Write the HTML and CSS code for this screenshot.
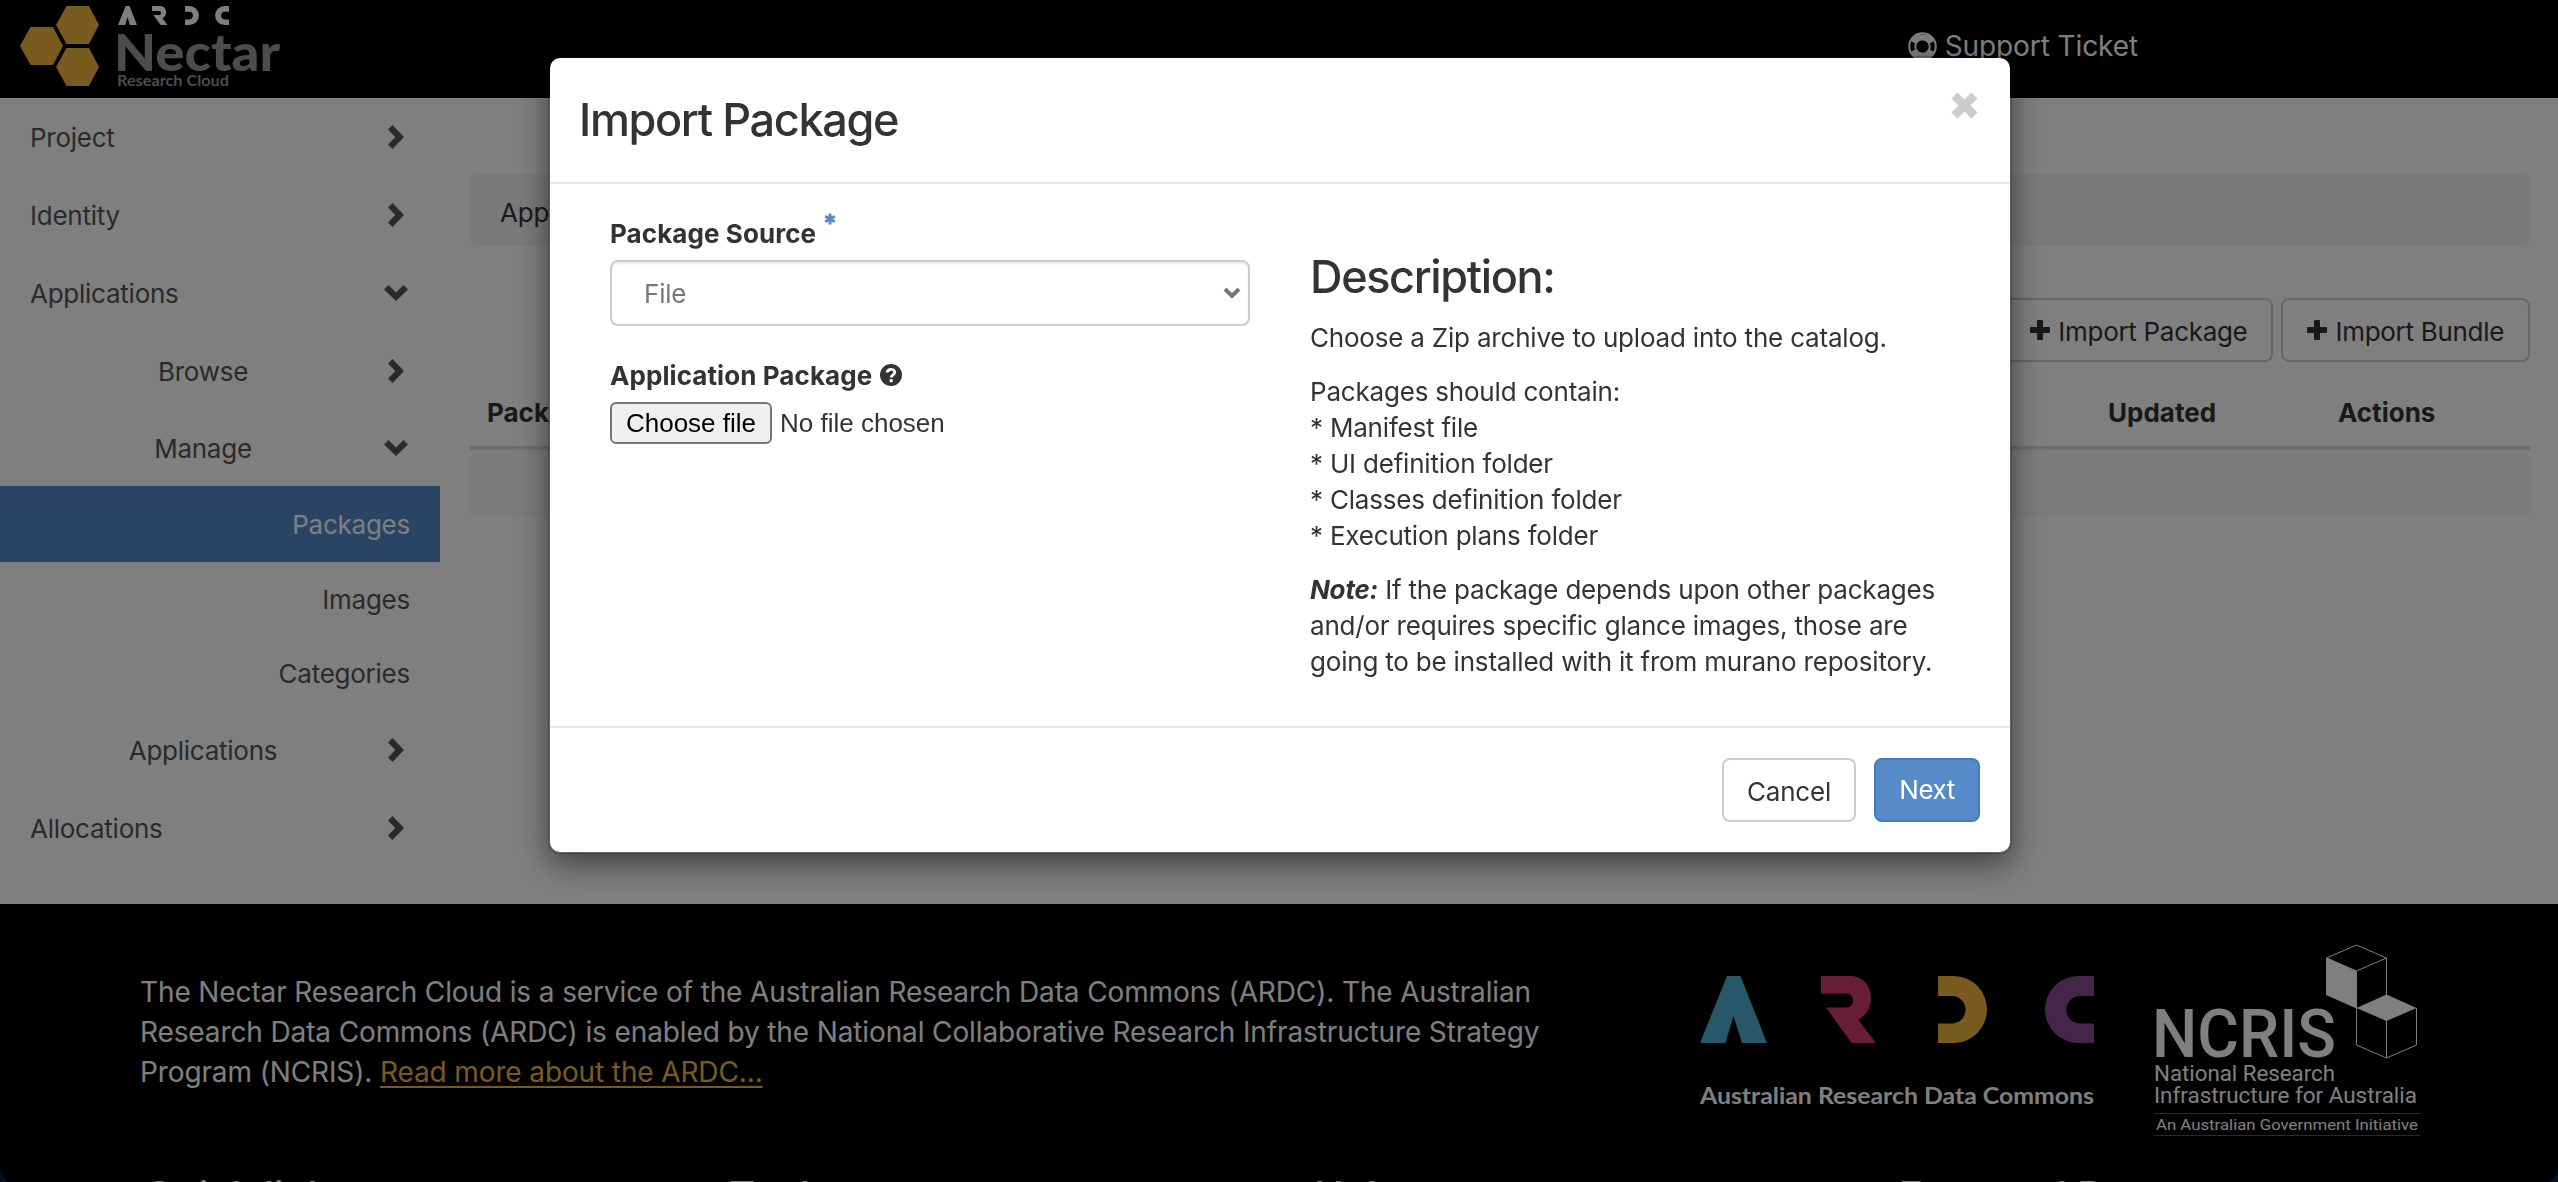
FILE: index.html
```html
<!DOCTYPE html>
<html lang="en">
<head>
<meta charset="utf-8">
<title>Packages - Nectar Research Cloud</title>
<link rel="stylesheet" href="styles.css">
</head>
<body>
<svg class="defs" width="0" height="0" aria-hidden="true">
  <symbol id="chev-right" viewBox="0 0 16 24"><path d="M4.500 0 16 12 4.500 24 0 19.500 7.300 12 0 4.500Z"/></symbol>
  <symbol id="chev-down" viewBox="0 0 24 16"><path d="M0 4.500 4.500 0 12 7.500 19.500 0 24 4.500 12 16Z"/></symbol>
  <symbol id="plus" viewBox="0 0 20 20"><path d="M8 0h4a1 1 0 0 1 1 1v6h6a1 1 0 0 1 1 1v4a1 1 0 0 1-1 1h-6v6a1 1 0 0 1-1 1H8a1 1 0 0 1-1-1v-6H1a1 1 0 0 1-1-1V8a1 1 0 0 1 1-1h6V1a1 1 0 0 1 1-1Z"/></symbol>
  <symbol id="ardc-a" viewBox="0 0 67 67"><path d="M27 0H40.500L67 67H42L33.500 40 25.500 67H0Z"/></symbol>
  <symbol id="ardc-r" viewBox="0 0 55 67"><path d="M0 0H30C42 0 50 10 50 22C50 32 45 40 37 43.500L55 67H30.500L5 31.500H25C30 31.500 32 28 32 24.500C32 21 30 17.500 25 17.500H0Z"/></symbol>
  <symbol id="ardc-d" viewBox="0 0 49 67"><path d="M0 0H15.500A33.500 33.500 0 0 1 15.500 67H0V47.500H15A13.800 13.800 0 0 0 15 20H0Z"/></symbol>
  <symbol id="ardc-c" viewBox="0 0 49 67"><path d="M49 0H33.500A33.500 33.500 0 0 0 33.500 67H49V47.500H34A13.800 13.800 0 0 1 34 20H49Z"/></symbol>
</svg>

<div class="page">
  <header class="topbar">
    <svg class="brand" viewBox="0 0 290 98" width="290" height="98" role="img" aria-label="ARDC Nectar Research Cloud">
      <g class="hex">
        <path d="M20 46 30.500 27H53L63 46 53 65H30.500Z"/>
        <path d="M56 25 66.500 6H89L99 25 89 44H66.500Z"/>
        <path d="M56 67 66.500 48H89L99 67 89 86H66.500Z"/>
      </g>
      <g class="brand-ardc">
        <use href="#ardc-a" x="118" y="6" width="19" height="19"/>
        <use href="#ardc-r" x="152" y="6" width="15.500" height="19"/>
        <use href="#ardc-d" x="185" y="6" width="14" height="19"/>
        <use href="#ardc-c" x="215" y="6" width="14" height="19"/>
      </g>
      <text class="brand-name" x="114" y="71" textLength="166" lengthAdjust="spacingAndGlyphs">Nectar</text>
      <text class="brand-sub" x="117" y="85.500" textLength="112" lengthAdjust="spacingAndGlyphs">Research Cloud</text>
    </svg>
    <a class="support">
      <svg viewBox="0 0 28 28" width="29" height="29"><circle cx="14" cy="14" r="12.800" fill="none" stroke="currentColor" stroke-width="2"/><circle cx="14" cy="14" r="7" fill="none" stroke="currentColor" stroke-width="2"/><path fill="currentColor" d="M9 2.500H19L16.500 8H11.500ZM9 25.500H19L16.500 20H11.500ZM5 5 9 3 11.500 8 8 11.500 3 9ZM23 5 19 3 16.500 8 20 11.500 25 9ZM5 23 9 25 11.500 20 8 16.500 3 19ZM23 23 19 25 16.500 20 20 16.500 25 19Z"/></svg>
      <span>Support Ticket</span>
    </a>
  </header>

  <div class="content">
    <nav class="sidebar">
      <a class="nav-row"><span>Project</span><svg class="cr"><use href="#chev-right"/></svg></a>
      <a class="nav-row"><span>Identity</span><svg class="cr"><use href="#chev-right"/></svg></a>
      <a class="nav-row"><span>Applications</span><svg class="cd"><use href="#chev-down"/></svg></a>
      <a class="nav-row sub"><span>Browse</span><svg class="cr"><use href="#chev-right"/></svg></a>
      <a class="nav-row sub last"><span>Manage</span><svg class="cd"><use href="#chev-down"/></svg></a>
      <a class="nav-leaf active">Packages</a>
      <a class="nav-leaf">Images</a>
      <a class="nav-leaf">Categories</a>
      <a class="nav-row sub"><span>Applications</span><svg class="cr"><use href="#chev-right"/></svg></a>
      <a class="nav-row"><span>Allocations</span><svg class="cr"><use href="#chev-right"/></svg></a>
    </nav>
    <main class="main">
      <div class="breadcrumb">Applications</div>
      <div class="table-actions">
        <a class="btn"><svg class="plus"><use href="#plus"/></svg>Import Package</a>
        <a class="btn"><svg class="plus"><use href="#plus"/></svg>Import Bundle</a>
      </div>
      <div class="table-head"><span>Package Name</span><span>Updated</span><span>Actions</span></div>
      <div class="table-row"></div>
    </main>
  </div>

  <footer class="footer">
    <div class="footer-top">
      <p class="footer-text">The Nectar Research Cloud is a service of the Australian Research Data Commons (ARDC). The Australian<br>Research Data Commons (ARDC) is enabled by the National Collaborative Research Infrastructure Strategy<br>Program (NCRIS). <a class="more">Read more about the ARDC...</a></p>
      <svg class="ardc" viewBox="0 0 394 140" width="394" height="140" role="img" aria-label="Australian Research Data Commons">
        <use class="teal" href="#ardc-a" x="0" y="0" width="67" height="67"/>
        <use class="rose" href="#ardc-r" x="121" y="0" width="55" height="67"/>
        <use class="gold" href="#ardc-d" x="238" y="0" width="49" height="67"/>
        <use class="plum" href="#ardc-c" x="345" y="0" width="49" height="67"/>
        <text class="ardc-name" x="0" y="128" textLength="394" lengthAdjust="spacingAndGlyphs">Australian Research Data Commons</text>
      </svg>
      <svg class="ncris" viewBox="0 0 268 196" width="268" height="196" role="img" aria-label="NCRIS">
        <g class="cube-lines">
          <path d="M172.500 14 202.500 1 232.500 14V51M172.500 14 202.500 27 232.500 14M202.500 27V64"/>
          <path d="M202.500 64V101L232.500 114 262.500 101V64M232.500 77V114"/>
        </g>
        <path class="cube-face" d="M172 13.500 202.500 27V64.500L172 51ZM202.500 64 232.500 50.500 262.500 64 232.500 77Z"/>
        <text class="ncris-name" x="-2" y="112.500" textLength="184" lengthAdjust="spacingAndGlyphs">NCRIS</text>
        <text class="ncris-line" x="0" y="137" textLength="181" lengthAdjust="spacingAndGlyphs">National Research</text>
        <text class="ncris-line" x="0" y="159" textLength="263" lengthAdjust="spacingAndGlyphs">Infrastructure for Australia</text>
        <path class="rule" d="M0 169.500H266M0 191.500H266"/>
        <text class="ncris-small" x="2" y="186" textLength="262" lengthAdjust="spacingAndGlyphs">An Australian Government Initiative</text>
      </svg>
    </div>
    <div class="footer-links"><h3>Quick links</h3><h3>Tools</h3><h3>Help</h3><h3>Featured Posts</h3></div>
  </footer>
</div>

<div class="backdrop">
  <section class="modal" role="dialog" aria-label="Import Package">
    <div class="modal-header">
      <h2>Import Package</h2>
      <svg class="close" viewBox="0 0 27 27" width="27" height="27"><path d="M3.500 3.500 23.500 23.500M23.500 3.500 3.500 23.500" stroke="currentColor" stroke-width="8.500"/></svg>
    </div>
    <div class="modal-body">
      <form class="form">
        <div class="label"><span>Package Source</span><svg class="star" viewBox="0 0 12 12" width="12" height="12"><path d="M6 .5V11.500M1.200 3.200 10.800 8.800M10.800 3.200 1.200 8.800" stroke="currentColor" stroke-width="3"/></svg></div>
        <div class="select"><span>File</span><svg viewBox="0 0 18 12" width="18" height="12"><path d="M2 2 9 9 16 2" fill="none" stroke="currentColor" stroke-width="4"/></svg></div>
        <div class="label second"><span>Application Package</span><svg class="help" viewBox="0 0 22 22" width="22" height="22"><circle cx="11" cy="11" r="11" fill="currentColor"/><path d="M7.200 8.500C7.500 4.500 14.800 4.300 14.800 8.300C14.800 10.800 11.200 10.800 11.200 13.500" fill="none" stroke="#fff" stroke-width="2.800"/><path d="M9.700 15.200h3v3h-3z" fill="#fff"/></svg></div>
        <div class="file"><span class="file-btn">Choose file</span><span>No file chosen</span></div>
      </form>
      <div class="description">
        <h3>Description:</h3>
        <p>Choose a Zip archive to upload into the catalog.</p>
        <p>Packages should contain:<br>* Manifest file<br>* UI definition folder<br>* Classes definition folder<br>* Execution plans folder</p>
        <p><em>Note:</em> If the package depends upon other packages<br>and/or requires specific glance images, those are<br>going to be installed with it from murano repository.</p>
      </div>
    </div>
    <div class="modal-footer"><a class="btn cancel">Cancel</a><a class="btn next">Next</a></div>
  </section>
</div>
</body>
</html>
```
FILE: styles.css
```css
* { box-sizing: border-box; }
html { background: #0d2440; }
body {
  margin: 0;
  height: 1182px;
  overflow: hidden;
  font-family: Inter, "Liberation Sans", sans-serif;
  font-size: 26px;
  letter-spacing: -.2px;
  color: #333;
}
svg { display: block; fill: currentColor; flex: none; letter-spacing: 0; }
.defs { position: absolute; }

.page { height: 1182px; overflow: hidden; }
.topbar { display: flex; justify-content: space-between; height: 98px; background: #000; }
.hex { fill: #f2b740; }
.brand-ardc { fill: #fff; }
.brand-name { fill: #999; font: 900 52px Lato, sans-serif; }
.brand-sub { fill: #999; font: 700 15.500px Lato, sans-serif; }
.support { display: flex; align-items: center; gap: 8px; height: 92px; margin-right: 420px; color: #fff; font-size: 28px; letter-spacing: -.1px; }

.content { display: flex; height: 806px; background: #fff; }
.sidebar { width: 440px; color: #555; letter-spacing: -.25px; }
.nav-row { display: flex; align-items: center; justify-content: space-between; height: 78px; padding: 0 32px 0 30px; }
.nav-row .cr { width: 16px; height: 24px; margin-right: 4px; }
.nav-row .cd { width: 24px; height: 16px; }
.nav-row.sub span { width: 346px; text-align: center; }
.nav-row.sub svg { margin-left: -30px; }
.nav-row.last { height: 76px; }
.nav-leaf { display: flex; align-items: center; justify-content: flex-end; height: 74.500px; padding-right: 30px; }
.nav-leaf.active { height: 76px; background: #548bc8; color: #fff; }

.main { flex: 1; padding: 76px 28px 0 30px; }
.breadcrumb { height: 72px; padding-left: 30px; border-radius: 8px; background: #f5f5f5; line-height: 78px; }
.table-actions { display: flex; justify-content: flex-end; gap: 8px; margin-top: 52px; }
.btn { display: flex; align-items: center; justify-content: center; gap: 8px; height: 64px; border: 2px solid #ccc; border-radius: 8px; background: #fff; color: #333; padding: 2px 24px 0; white-space: nowrap; }
.plus { width: 20px; height: 20px; margin-top: -3px; }
.table-actions .btn { letter-spacing: -.3px; }
.table-head { display: grid; grid-template-columns: 1621px 230px 1fr; align-items: center; height: 88px; padding: 16px 0 0 17px; border-bottom: 4px solid #ddd; font-weight: 700; letter-spacing: 0; }
.table-row { height: 68px; background: #f9f9f9; }

.footer { height: 280px; background: #000; border-radius: 0 0 18px 18px; color: #fff; }
.footer-top { display: flex; align-items: flex-start; height: 272px; padding-left: 140px; }
.footer-text { width: 1560px; margin: 68px 0 0; font-size: 28px; line-height: 40px; letter-spacing: -.12px; white-space: nowrap; }
.more { color: #f2b740; text-decoration: underline; text-underline-offset: 4px; }
.ardc { margin-top: 72px; }
.teal { fill: #4eafd1; }
.rose { fill: #d03870; }
.gold { fill: #f2b740; }
.plum { fill: #884d94; }
.ardc-name { fill: #fff; font: 700 22px Lato, sans-serif; }
.ncris { margin: 40px 0 0 60px; }
.cube-lines { fill: none; stroke: #fff; stroke-width: 1; }
.cube-face { fill: #fff; }
.ncris-name { fill: #fff; font: 500 66px Roboto, sans-serif; }
.ncris-line { fill: #fff; font: 400 22px Roboto, sans-serif; }
.ncris-small { fill: #fff; font: 400 15.500px Roboto, sans-serif; }
.rule { stroke: #555; stroke-width: 1; }
.footer-links { display: grid; grid-template-columns: repeat(4, 585px); padding-left: 144px; }
.footer-links h3 { margin: 0; font-size: 40px; font-weight: 500; line-height: 40px; }

.backdrop { position: fixed; inset: 0; padding-top: 56px; background: rgba(0, 0, 0, .5); }
.modal { width: 1464px; height: 798px; margin: 0 0 0 548px; border: 2px solid rgba(0, 0, 0, .2); border-radius: 12px; background: #fff; background-clip: padding-box; box-shadow: 0 10px 30px rgba(0, 0, 0, .5); }
.modal-header { display: flex; justify-content: space-between; height: 126px; padding: 34px 32px 0 29px; border-bottom: 2px solid #e5e5e5; }
.modal h2, .modal h3 { margin: 0; font-size: 45px; font-weight: 500; line-height: 56px; letter-spacing: -1.350px; }
.close { color: #ccc; }
.modal-body { display: flex; gap: 60px; height: 542px; padding: 30px 60px 0; }
.form { width: 640px; }
.label { display: flex; align-items: center; height: 38px; font-weight: 700; letter-spacing: .08px; }
.star { margin: -28px 0 0 8px; color: #548bc8; }
.select { display: flex; align-items: center; justify-content: space-between; height: 66px; margin-top: 8px; padding: 0 7px 0 32px; border: 2px solid #ccc; border-radius: 8px; box-shadow: inset 0 2px 2px rgba(0, 0, 0, .075); color: #777; }
.label.second { margin-top: 30px; }
.help { margin-left: 8px; }
.file { display: flex; align-items: center; gap: 8px; margin-top: 8px; font-family: "Liberation Sans", Arial, sans-serif; letter-spacing: 0; }
.file-btn { display: flex; align-items: center; justify-content: center; width: 162px; height: 42px; border: 2px solid #767676; border-radius: 6px; background: #efefef; color: #000; }
.description { white-space: nowrap; padding-top: 35px; }
.description p { margin: 0 0 18px; line-height: 36px; }
.description h3 { margin-bottom: 15px; }
.description em { font-weight: 700; }
.modal-footer { display: flex; justify-content: flex-end; gap: 18px; padding: 30px 30px 0; border-top: 2px solid #e5e5e5; }
.cancel { width: 134px; }
.next { width: 106px; padding: 0 0 2px; border-color: #447cba; background: #548bc8; color: #fff; letter-spacing: -.5px; }
```
